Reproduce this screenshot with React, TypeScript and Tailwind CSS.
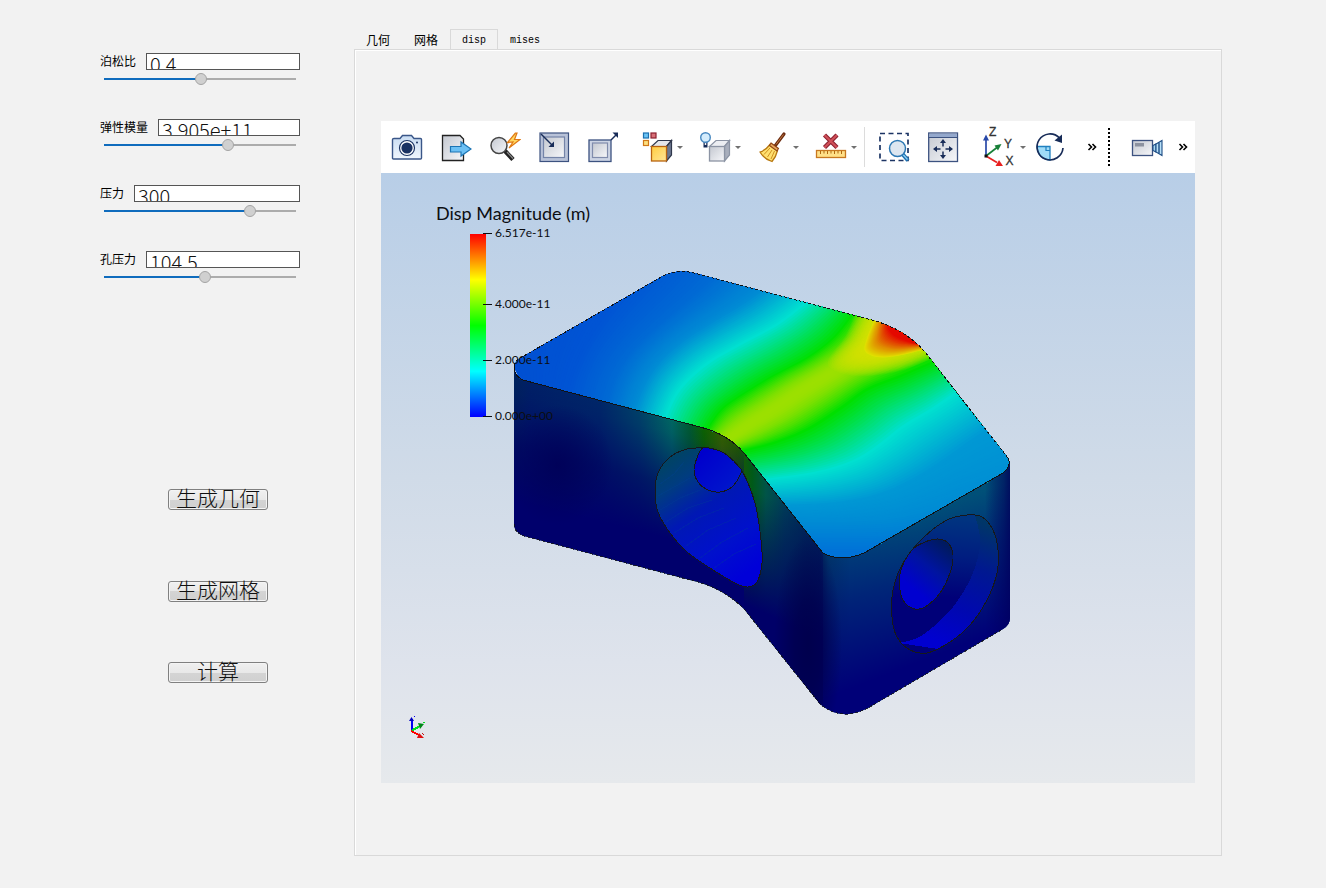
import React, { useState } from "react";

type Pt = [number, number];
type Rgb = [number, number, number];

/* ---------- geometry helpers ---------- */

function smooth(pts: Pt[], closed = false): string {
  const n = pts.length;
  const at = (i: number): Pt => (closed ? pts[(i + n) % n] : pts[Math.max(0, Math.min(n - 1, i))]);
  let d = `M${pts[0][0]} ${pts[0][1]}`;
  const last = closed ? n : n - 1;
  for (let i = 0; i < last; i++) {
    const [a, b, c, e] = [at(i - 1), at(i), at(i + 1), at(i + 2)];
    d += `C${b[0] + (c[0] - a[0]) / 6} ${b[1] + (c[1] - a[1]) / 6} ${c[0] - (e[0] - b[0]) / 6} ${c[1] - (e[1] - b[1]) / 6} ${c[0]} ${c[1]}`;
  }
  return closed ? d + "Z" : d;
}

const mix = (a: number, b: number, t: number) => a + (b - a) * t;
const mixPts = (a: Pt[], b: Pt[], t: number): Pt[] =>
  a.map((p, i) => [mix(p[0], b[i][0], t), mix(p[1], b[i][1], t)] as Pt);
const mixRgb = (a: Rgb, b: Rgb, t: number) =>
  `rgb(${a.map((v, i) => Math.round(mix(v, b[i], t))).join(",")})`;

/* Level curves of the displacement field on the top face, left to right. */
const levels: { c: Rgb; p: Pt[] }[] = [
  { c: [0, 80, 210], p: [[500, 340], [505, 350], [510, 360], [515, 370], [520, 380], [525, 390], [530, 400]] },
  { c: [0, 84, 212], p: [[640, 262], [620, 290], [605, 310], [592, 330], [580, 352], [570, 378], [565, 400]] },
  { c: [0, 106, 212], p: [[725, 262], [700, 288], [676, 309], [652, 330], [630, 352], [614, 378], [606, 405]] },
  { c: [0, 140, 212], p: [[774, 280], [742, 303], [709, 323], [679, 343], [656, 365], [642, 388], [632, 415]] },
  { c: [0, 224, 208], p: [[815, 294], [777, 323], [740, 343], [707, 362], [683, 383], [670, 403], [660, 430]] },
  { c: [0, 224, 0], p: [[853, 312], [833, 337], [807, 357], [773, 375], [740, 395], [720, 410], [705, 432]] },
  { c: [156, 224, 0], p: [[890, 315], [868, 345], [835, 369], [802, 389], [772, 409], [744, 427], [718, 446]] },
  { c: [0, 224, 0], p: [[945, 356], [900, 375], [867, 388], [840, 407], [807, 428], [773, 442], [730, 453]] },
  { c: [0, 224, 208], p: [[965, 385], [933, 407], [903, 425], [880, 443], [853, 460], [813, 472], [755, 480]] },
  { c: [0, 152, 212], p: [[1010, 415], [975, 437], [945, 458], [915, 477], [880, 493], [835, 502], [775, 505]] },
  { c: [0, 140, 212], p: [[1060, 480], [1020, 488], [975, 496], [935, 507], [890, 517], [840, 520], [780, 520]] },
  { c: [0, 112, 216], p: [[1100, 540], [1060, 545], [1010, 548], [960, 550], [900, 553], [850, 553], [800, 553]] },
];

const RIDGE = 6;
/* The field flattens out on both sides of the ridge. */
function ease(i: number, t: number) {
  if (i + 1 === RIDGE) return Math.sin((t * Math.PI) / 2);
  if (i === RIDGE) return 1 - Math.cos((t * Math.PI) / 2);
  return t;
}

const bands: { d: string; fill: string }[] = [];
for (let i = 0; i < levels.length - 1; i++) {
  const steps = 18;
  for (let s = 0; s < steps; s++) {
    const t = s / steps;
    const p = mixPts(levels[i].p, levels[i + 1].p, t);
    bands.push({
      d: `${smooth(p)}L${p[6][0]} 640L1200 640L1200 230L${p[0][0]} 230Z`,
      fill: mixRgb(levels[i].c, levels[i + 1].c, ease(i, t)),
    });
  }
}

/* Closed rings around the peak value. */
const halo: Pt[] = [[856, 310], [846, 335], [828, 364], [856, 376], [900, 371], [938, 356]];
const ringYellow: Pt[] = [[876, 316], [867, 338], [865, 351], [877, 357], [897, 356], [926, 349]];
const ringOrange: Pt[] = [[881, 316], [876, 334], [876, 344], [886, 349], [900, 350], [922, 347]];
const ringRed: Pt[] = [[888, 318], [888, 328], [892, 334], [898, 338], [906, 341], [916, 344]];
const close = (p: Pt[]) => `${smooth(p)}L960 330L900 280Z`;

const rings: { d: string; fill: string; o: number }[] = [];
for (let s = 0; s < 20; s++)
  rings.push({ d: close(mixPts(halo, ringYellow, s / 20)), fill: "rgb(224,224,0)", o: 0.08 });
for (let s = 0; s < 12; s++)
  rings.push({ d: close(mixPts(ringYellow, ringOrange, s / 12)), fill: mixRgb([224, 224, 0], [224, 144, 0], s / 12), o: 1 });
for (let s = 0; s <= 12; s++)
  rings.push({ d: close(mixPts(ringOrange, ringRed, s / 12)), fill: mixRgb([224, 144, 0], [228, 8, 0], s / 12), o: 1 });

const topFace =
  "M523 380Q514 376 514 366Q514 361 522 357L663 276Q678 269 694 273L872 320Q905 329 925 352L1008 458Q1012 466 1003 473L864 553Q841 563 823 553L744 453Q728 434 700 427Z";
const sides =
  "M514 366V524Q514 532 524 536L690 580Q722 587 744 609L820 704Q841 722 868 708L1003 629Q1010 625 1010 618V462L1003 473L864 553Q841 563 823 553L744 453Q728 434 700 427L523 380Q514 376 514 366Z";

const bore: Pt[] = [[703, 448], [687, 449], [670, 457], [658, 473], [655, 492], [658, 512], [670, 533], [687, 552], [713, 570], [737, 584], [748, 587], [757, 582], [762, 563], [761, 540], [756, 507], [748, 483], [740, 468], [727, 455], [717, 450]];
const boreEnd: Pt[] = [[703, 448], [697, 458], [694, 470], [698, 482], [708, 490], [720, 492], [732, 487], [741, 473], [740, 468], [727, 455], [717, 450]];
const pocket: Pt[] = [[967, 515], [982, 517], [993, 530], [998, 550], [997, 573], [987, 600], [970, 625], [950, 642], [927, 653], [910, 650], [897, 637], [892, 617], [893, 590], [903, 563], [923, 538], [947, 520]];
const pocketHole: Pt[] = [[938, 539], [948, 543], [953, 555], [950, 573], [940, 593], [925, 607], [915, 609], [905, 603], [900, 590], [901, 570], [912, 550], [925, 542]];
const pocketWall: Pt[] = [[975, 515], [980, 537], [978, 557], [970, 580], [953, 607], [933, 627], [917, 638], [899, 643]];

const ticks: [string, number][] = [
  ["6.517e-11", 233],
  ["4.000e-11", 304],
  ["2.000e-11", 360],
  ["0.000e+00", 416],
];

function Grad({ id, v, stops }: { id: string; v: number[]; stops: [number, string, number?][] }) {
  return (
    <linearGradient id={id} gradientUnits="userSpaceOnUse" x1={v[0]} y1={v[1]} x2={v[2]} y2={v[3]}>
      {stops.map(([o, c, a], i) => (
        <stop key={i} offset={o} stopColor={c} stopOpacity={a ?? 1} />
      ))}
    </linearGradient>
  );
}

const x = (px: number) => (px - 514) / 496;

function Scene() {
  return (
    <svg viewBox="381 173 814 610" className="block w-full" role="img" aria-label="Disp Magnitude (m)">
      <defs>
        <Grad id="sky" v={[0, 173, 0, 783]} stops={[[0, "#b8cee7"], [0.5, "#d0dbe8"], [0.8, "#dee3ec"], [1, "#e6e9ec"]]} />
        <Grad id="bar" v={[0, 234, 0, 417]} stops={[[0, "#ff0000"], [0.25, "#ffff00"], [0.5, "#00ff00"], [0.75, "#00ffff"], [1, "#0000ff"]]} />
        <Grad
          id="side"
          v={[514, 0, 1010, 0]}
          stops={[[0, "#00225c"], [x(530), "#001f66"], [x(600), "#002668"], [x(640), "#004068"], [x(672), "#006662"], [x(690), "#005a30"], [x(704), "#0c6200"], [x(722), "#325f00"], [x(738), "#205800"], [x(752), "#005a18"], [x(766), "#005448"], [x(785), "#003a58"], [x(805), "#002858"], [x(820), "#002058"], [x(828), "#003468"], [x(850), "#004078"], [x(920), "#004c78"], [x(985), "#005078"], [x(1004), "#004070"], [1, "#002868"]]}
        />
        <Grad id="fadeL" v={[630, 408, 602, 522]} stops={[[0, "#000068", 0], [0.12, "#000068", 0.08], [0.55, "#000064", 0.65], [1, "#00006c", 1]]} />
        <Grad id="fadeM" v={[785, 504, 733, 620]} stops={[[0, "#000058", 0], [0.5, "#000860", 0.65], [0.85, "#000068", 1], [1, "#000068", 1]]} />
        <Grad id="fadeR" v={[930, 512, 985, 652]} stops={[[0, "#000078", 0], [0.35, "#000078", 0.45], [0.9, "#000078", 1], [1, "#000078", 1]]} />
        <Grad id="edgeR" v={[985, 0, 1010, 0]} stops={[[0, "#000060", 0], [1, "#000058", 0.6]]} />
        <radialGradient id="corner">
          <stop offset="0" stopColor="#00004a" stopOpacity="0.9" />
          <stop offset="0.4" stopColor="#00004a" stopOpacity="0.7" />
          <stop offset="1" stopColor="#00004a" stopOpacity="0" />
        </radialGradient>
        <radialGradient id="hollow">
          <stop offset="0" stopColor="#000058" stopOpacity="0.9" />
          <stop offset="1" stopColor="#000058" stopOpacity="0" />
        </radialGradient>
        <Grad id="boreFill" v={[668, 455, 748, 572]} stops={[[0, "#004460"], [0.2, "#003c80"], [0.45, "#0018b4"], [0.75, "#0010cc"], [1, "#0000d8"]]} />
        <Grad id="boreEndFill" v={[700, 455, 735, 490]} stops={[[0, "#0000cc"], [1, "#0018cc"]]} />
        <Grad id="pocketFill" v={[945, 518, 940, 650]} stops={[[0, "#003480"], [0.3, "#001c80"], [0.6, "#000078"], [1, "#000078"]]} />
        <Grad id="holeFill" v={[946, 545, 912, 588]} stops={[[0, "#001a60"], [0.5, "#0014a0"], [1, "#0000d0"]]} />
        <Grad id="wallFill" v={[990, 525, 945, 645]} stops={[[0, "#003668"], [0.35, "#001890"], [0.7, "#0008b0"], [1, "#0000d0"]]} />
        <clipPath id="topClip"><path d={topFace} /></clipPath>
        <clipPath id="sideClip"><path d={sides} /></clipPath>
        <clipPath id="pocketClip"><path d={smooth(pocket, true)} /></clipPath>
      </defs>

      <rect x="381" y="173" width="814" height="610" fill="url(#sky)" />

      <g clipPath="url(#sideClip)">
        <rect x="510" y="350" width="504" height="370" fill="url(#side)" />
        <path d="M510 350H744V720H510Z" fill="url(#fadeL)" />
        <path d="M744 350H823V720H744Z" fill="url(#fadeM)" />
        <path d="M823 350H1014V720H823Z" fill="url(#fadeR)" />
        <ellipse cx="808" cy="645" rx="34" ry="110" fill="url(#corner)" />
        <ellipse cx="558" cy="465" rx="55" ry="60" fill="url(#hollow)" />
        <rect x="985" y="450" width="28" height="200" fill="url(#edgeR)" />
      </g>

      <g shapeRendering="crispEdges">
        <path d={smooth(bore, true)} fill="url(#boreFill)" stroke="#16181c" />
        <g fill="none" stroke="#004098" strokeOpacity="0.28">
          <path d="M660 484L674 474L684 462M658 496L676 486L690 478M660 510L680 498L700 490M666 522L688 508L712 500M674 533L698 518L724 508M686 546L708 530L736 518M700 558L722 542L748 528M714 568L734 554L756 544" />
        </g>
        <path d={smooth(boreEnd, true)} fill="url(#boreEndFill)" stroke="#16181c" />
        <path d={smooth(pocket, true)} fill="url(#pocketFill)" />
        <path d={`${smooth(pocketWall)}L1010 660L1010 510Z`} fill="url(#wallFill)" clipPath="url(#pocketClip)" />
        <path d={smooth(pocket, true)} fill="none" stroke="#16181c" />
        <path d={smooth(pocketHole, true)} fill="url(#holeFill)" stroke="#16181c" />
      </g>

      <g clipPath="url(#topClip)">
        {bands.map((b, i) => (
          <path key={i} d={b.d} fill={b.fill} />
        ))}
        {rings.map((r, i) => (
          <path key={i} d={r.d} fill={r.fill} fillOpacity={r.o} />
        ))}
      </g>

      <g fill="none" stroke="#101214" shapeRendering="crispEdges">
        <path d="M514 366Q514 376 523 380L700 427Q728 434 744 453L823 553Q841 563 864 553L1003 473Q1012 466 1008 458" />
        <path d="M514 366Q514 361 522 357L663 276Q678 269 694 273L872 320Q905 329 925 352L1008 458" strokeDasharray="3 2" />
        <path d="M514 524Q514 532 524 536L690 580Q722 587 744 609L820 704Q841 722 868 708L1003 629" strokeDasharray="3 2" strokeOpacity="0.8" />
      </g>

      <rect x="470" y="234" width="16" height="183" fill="url(#bar)" />
      <g className="font-['Lato',sans-serif]" fill="#0c0e12">
        <text x="436" y="220" fontSize="18">Disp Magnitude (m)</text>
        {ticks.map(([label, y]) => (
          <g key={label}>
            <path d={`M483 ${y + 0.5}H492`} stroke="#0c0e12" />
            <text x="495" y={y + 4} fontSize="12">{label}</text>
          </g>
        ))}
      </g>

      <g fill="none" strokeWidth="2" shapeRendering="crispEdges">
        <path d="M411.500 731V719" stroke="#0000f0" />
        <path d="M411 731L420 726" stroke="#00e020" />
        <path d="M411 731L419 735" stroke="#ff0000" />
        <path d="M414 716.500H415" stroke="#0000f0" strokeWidth="1" />
        <path d="M423 723L425 722" stroke="#00e020" strokeWidth="1" />
        <path d="M422 733L424 735" stroke="#c01010" strokeWidth="1" />
      </g>
      <path d="M409 721L411.500 717L414 721Z" fill="#0000c0" />
      <path d="M418 723L424 724L420 729Z" fill="#008818" />
      <path d="M419 733L424 738L417 738Z" fill="#e01010" />
    </svg>
  );
}

/* ---------- toolbar icons ---------- */

function Icon({ children }: { children: React.ReactNode }) {
  return (
    <svg viewBox="0 0 32 32" className="block size-8 shrink-0" fill="none" aria-hidden="true">
      <defs>
        <linearGradient id="steel" x1="0" y1="0" x2="1" y2="1">
          <stop offset="0" stopColor="#c4c8d0" />
          <stop offset="1" stopColor="#f6f7fa" />
        </linearGradient>
        <linearGradient id="ice" x1="0" y1="0" x2="0" y2="1">
          <stop offset="0" stopColor="#c8dcf2" />
          <stop offset="1" stopColor="#f0f6fd" />
        </linearGradient>
        <linearGradient id="gold" x1="0" y1="0" x2="1" y2="1">
          <stop offset="0" stopColor="#ffcc40" />
          <stop offset="1" stopColor="#ffe698" />
        </linearGradient>
      </defs>
      {children}
    </svg>
  );
}

const CameraIcon = () => (
  <Icon>
    <path d="M3 7.500H9L11.500 4.500H20.500L23 7.500H29.500Q30.500 7.500 30.500 8.500V27Q30.500 28 29.500 28H2.500Q1.500 28 1.500 27V8.500Q1.500 7.500 3 7.500Z" fill="url(#ice)" stroke="#3a5688" strokeWidth="1.400" />
    <circle cx="16" cy="17" r="7.500" fill="#fff" stroke="#1c3464" strokeWidth="1.200" />
    <circle cx="16" cy="17" r="5.600" fill="#1a3262" />
    <circle cx="26" cy="11.500" r="1" fill="#1a3262" />
  </Icon>
);
const ExportIcon = () => (
  <Icon>
    <path d="M2.500 4.500H20L23.500 8V29.500H2.500Z" fill="url(#steel)" stroke="#222" strokeWidth="1.300" />
    <path d="M10.500 15.500H21V11L31 18L21 25V21H10.500Z" fill="#6cc0f4" stroke="#1c74b4" strokeWidth="1.200" />
  </Icon>
);
const QuickFindIcon = () => (
  <Icon>
    <path d="M16 20L24 28.500" stroke="#222" strokeWidth="4.500" />
    <path d="M18 21L24 27.500" stroke="#888" strokeWidth="1.200" />
    <circle cx="10" cy="14.500" r="8" fill="url(#steel)" stroke="#444" strokeWidth="1.500" />
    <path d="M26.500 2L18.500 11.500L24 11L20 17L31 8.500L25.500 8.500L28 2Z" fill="#ffd860" stroke="#e07814" strokeWidth="1.200" />
  </Icon>
);
const ZoomInBoxIcon = () => (
  <Icon>
    <rect x="2" y="2" width="28.500" height="28.500" fill="#b8c2d8" stroke="#3c5280" strokeWidth="1.200" />
    <rect x="5.500" y="6" width="21" height="20.500" fill="url(#steel)" stroke="#7484a8" strokeWidth="1.200" />
    <path d="M3 3L15 15" stroke="#182c58" strokeWidth="1.400" />
    <path d="M16 16V10.500L10.500 16Z" fill="#182c58" />
  </Icon>
);
const ZoomOutBoxIcon = () => (
  <Icon>
    <rect x="2" y="9" width="22" height="21.500" fill="#ccd4e4" stroke="#3c5280" strokeWidth="1.300" />
    <rect x="5.500" y="12" width="15" height="14.500" fill="url(#steel)" stroke="#808cac" strokeWidth="1.200" />
    <path d="M24 9L30 3" stroke="#182c58" strokeWidth="1.400" />
    <path d="M31 1.500V7L25.500 1.500Z" fill="#182c58" />
  </Icon>
);
const CubeIcon = () => (
  <Icon>
    <rect x="2.500" y="2" width="5" height="5" fill="#6cc4f4" stroke="#1c70b0" strokeWidth="1.200" />
    <rect x="10" y="2" width="5" height="5" fill="#d87078" stroke="#8c2030" strokeWidth="1.200" />
    <rect x="2.500" y="9.500" width="5" height="5" fill="#fce080" stroke="#d07818" strokeWidth="1.200" />
    <path d="M10.500 15.500L17 9.500H30.500L25.500 15.500Z" fill="#e4e6ea" stroke="#30384c" strokeWidth="1.200" />
    <path d="M25.500 15.500L30.500 9.500V24L25.500 30Z" fill="#6c7890" stroke="#30384c" strokeWidth="1.200" />
    <rect x="10.500" y="15.500" width="15" height="14.500" fill="url(#gold)" stroke="#b86410" strokeWidth="1.300" />
  </Icon>
);
const BulbCubeIcon = () => (
  <Icon>
    <path d="M10.500 15.500L17 9.500H30.500L25.500 15.500Z" fill="#eceef2" stroke="#8c94a4" strokeWidth="1.200" />
    <path d="M25.500 15.500L30.500 9.500V24L25.500 30Z" fill="#a8aebc" stroke="#8c94a4" strokeWidth="1.200" />
    <rect x="10.500" y="15.500" width="15" height="14.500" fill="url(#steel)" stroke="#8c94a4" strokeWidth="1.300" />
    <path d="M6.500 11V16.500" stroke="#182c58" strokeWidth="4" />
    <path d="M6.500 11V14" stroke="#f0f4fa" strokeWidth="1.500" />
    <circle cx="6.500" cy="6.500" r="4.800" fill="#d4ecfc" stroke="#4888c0" strokeWidth="1.400" />
  </Icon>
);
const BroomIcon = () => (
  <Icon>
    <path d="M27 3L18 15" stroke="#6c2c10" strokeWidth="3.200" strokeLinecap="round" />
    <path d="M26.500 3.500L19 13.500" stroke="#c07840" strokeWidth="1" />
    <path d="M13 13.500Q9 19 3 21Q7 28 15 30.500Q19 26 20.500 19.500Z" fill="#ffe070" stroke="#b87810" strokeWidth="1.300" />
    <path d="M13 17L7 23.500M15 19L10.500 26M17.500 20L14 28" stroke="#d09020" strokeWidth="1" />
    <path d="M14 12L21.500 17.500L20 20L12.500 14.500Z" fill="#e8a860" stroke="#904414" strokeWidth="1.100" />
  </Icon>
);
const ClearRulerIcon = () => (
  <Icon>
    <path d="M9.500 4L22 16.500M22 4L9.500 16.500" stroke="#8c2030" strokeWidth="4.400" />
    <path d="M9.500 4L22 16.500M22 4L9.500 16.500" stroke="#d05058" strokeWidth="2.200" />
    <rect x="1.500" y="19.500" width="29" height="7" fill="#ffe088" stroke="#c87820" strokeWidth="1.300" />
    <path d="M5.500 20V23M9 20V22.500M12.500 20V23M16 20V22.500M19.500 20V23M23 20V22.500M26.500 20V23" stroke="#b06810" />
  </Icon>
);
const SelectZoomIcon = () => (
  <Icon>
    <rect x="2" y="2.500" width="28" height="27" stroke="#1c3464" strokeWidth="1.700" strokeDasharray="5 3.500" />
    <path d="M24.500 23L30 29.500" stroke="#1c70b0" strokeWidth="4" />
    <path d="M25 23.500L29.500 28.500" stroke="#90d0f4" strokeWidth="1.200" />
    <circle cx="19.500" cy="17.500" r="8" fill="#dce6f0" stroke="#2c78b4" strokeWidth="1.500" />
  </Icon>
);
const FitIcon = () => (
  <Icon>
    <rect x="1.700" y="2" width="28.800" height="28.500" fill="url(#steel)" stroke="#3c5280" strokeWidth="1.300" />
    <rect x="2.300" y="2.600" width="27.600" height="3.400" fill="#94a8cc" />
    <path d="M1.500 6.500H30.500" stroke="#3c5280" />
    <path d="M16 11V15.500M16 20.500V25M9 18H13.500M18.500 18H23" stroke="#182c58" strokeWidth="1.500" />
    <path d="M16 8L19 12H13ZM16 28L19 24H13ZM6 18L10 15V21ZM26 18L22 15V21Z" fill="#182c58" />
  </Icon>
);
const AxesIcon = () => (
  <svg viewBox="0 -8 34 48" className="block h-12 w-[34px] shrink-0" fill="none" aria-hidden="true">
    <path d="M4 25V8" stroke="#2848a8" strokeWidth="1.700" />
    <path d="M4 3.500L7 9.500H1Z" fill="#2848a8" />
    <path d="M4 25L15 16.500" stroke="#188038" strokeWidth="1.700" />
    <path d="M19.500 13L16 19.500L12.500 14.500Z" fill="#188038" />
    <path d="M4 25L15 31.500" stroke="#e82020" strokeWidth="1.700" />
    <path d="M21 35H13.500L17 29Z" fill="#e82020" />
    <rect x="2.500" y="23.500" width="3" height="3" fill="#111" />
    <g className="font-['Liberation_Sans',sans-serif]" fill="#333" fontSize="12" stroke="#333" strokeWidth="0.300">
      <text x="7" y="5">Z</text>
      <text x="22" y="16.500">Y</text>
      <text x="23.500" y="34">X</text>
    </g>
  </svg>
);
const RotateIcon = () => (
  <Icon>
    <path d="M3 15.500H16V29Q4 28 3 15.500Z" fill="#a0dcf8" stroke="#2080c0" strokeWidth="1.300" />
    <path d="M12 15.500V19.500H16" stroke="#2080c0" strokeWidth="1.200" />
    <path d="M25.500 7A13 13 0 1 0 29 17" stroke="#182c58" strokeWidth="1.700" />
    <path d="M28 3.500V12L20.500 9.500Z" fill="#182c58" />
  </Icon>
);
const VideoIcon = () => (
  <Icon>
    <rect x="1.500" y="9.500" width="20" height="15" fill="url(#steel)" stroke="#3c5280" strokeWidth="1.300" />
    <rect x="4" y="12" width="9" height="3.500" fill="#8c92a0" />
    <path d="M22 14.500L25 13V21L22 19.500Z" fill="#a8d8f4" stroke="#1c4c84" strokeWidth="1.100" />
    <path d="M25 13L31 9.500V24.500L25 21Z" fill="#b8e0f8" stroke="#1c4c84" strokeWidth="1.100" />
    <path d="M28 11.500V22.500" stroke="#1c4c84" strokeWidth="1.400" />
  </Icon>
);

function ToolButton({ label, children }: { label: string; children: React.ReactNode }) {
  return (
    <button type="button" aria-label={label} className="flex w-[49px] shrink-0 items-center justify-center">
      {children}
    </button>
  );
}
function MenuButton({ label, children }: { label: string; children: React.ReactNode }) {
  return (
    <button type="button" aria-label={label} aria-haspopup="menu" className="flex w-[58px] shrink-0 items-center gap-1 pl-[9px]">
      {children}
      <span className="size-0 border-x-[3px] border-t-[3px] border-x-transparent border-t-[#707070]" />
    </button>
  );
}
function MoreButton() {
  return (
    <button type="button" aria-label="More" className="flex w-5 shrink-0 items-center justify-center">
      <svg viewBox="0 0 10 8" className="h-2 w-2.5" fill="none" stroke="#000" strokeWidth="1.600" aria-hidden="true">
        <path d="M1.500 1L4.500 4L1.500 7M5.500 1L8.500 4L5.500 7" />
      </svg>
    </button>
  );
}

function Toolbar() {
  return (
    <div role="toolbar" aria-label="View" className="flex h-[52px] items-center overflow-hidden bg-white pl-px">
      <ToolButton label="Screenshot"><CameraIcon /></ToolButton>
      <ToolButton label="Export"><ExportIcon /></ToolButton>
      <ToolButton label="Quick find"><QuickFindIcon /></ToolButton>
      <ToolButton label="Zoom in box"><ZoomInBoxIcon /></ToolButton>
      <ToolButton label="Zoom out box"><ZoomOutBoxIcon /></ToolButton>
      <div className="ml-[5px] flex">
        <MenuButton label="Display"><CubeIcon /></MenuButton>
        <MenuButton label="Lighting"><BulbCubeIcon /></MenuButton>
        <MenuButton label="Clean"><BroomIcon /></MenuButton>
        <MenuButton label="Clear measure"><ClearRulerIcon /></MenuButton>
      </div>
      <div className="mr-1 h-10 w-px shrink-0 bg-[#dcdcdc]" />
      <ToolButton label="Zoom to selection"><SelectZoomIcon /></ToolButton>
      <ToolButton label="Fit view"><FitIcon /></ToolButton>
      <div className="-mr-1.5 ml-1.5 flex">
        <MenuButton label="Axes"><AxesIcon /></MenuButton>
      </div>
      <ToolButton label="Rotate"><RotateIcon /></ToolButton>
      <div className="ml-2 flex"><MoreButton /></div>
      <div className="mx-1.5 h-[38px] shrink-0 border-l-2 border-dotted border-black" />
      <div className="ml-1.5 flex">
        <ToolButton label="Record"><VideoIcon /></ToolButton>
      </div>
      <div className="ml-0.5 flex"><MoreButton /></div>
    </div>
  );
}

/* ---------- parameters ---------- */

function Param({ id, label, text, start }: { id: string; label: string; text: string; start: number }) {
  const [value, setValue] = useState(start);
  const [entry, setEntry] = useState(text);
  const fill = ((6 + value * 1.8) / 192) * 100;
  return (
    <div className="h-[66px]">
      <div className="flex items-center gap-2.5">
        <label htmlFor={id} className="shrink-0 text-xs leading-4">{label}</label>
        <input
          id={id}
          value={entry}
          onChange={(e) => setEntry(e.target.value)}
          className="h-[17px] w-0 min-w-0 flex-1 border border-[#555] bg-white px-[3px] pt-1 pb-0 font-['Noto_Sans_CJK_SC',sans-serif] text-[20px] leading-[20px] font-light text-[#111] outline-none"
        />
      </div>
      <input
        type="range"
        aria-label={label}
        min={0}
        max={100}
        step="any"
        value={value}
        onChange={(e) => setValue(Number(e.target.value))}
        style={{ backgroundImage: `linear-gradient(to right, #0f6cbd ${fill}%, #acacac ${fill}%)` }}
        className="mx-1 mt-[3px] block h-3 w-[calc(100%-8px)] appearance-none bg-[length:100%_2px] bg-center bg-no-repeat [&::-webkit-slider-thumb]:size-3 [&::-webkit-slider-thumb]:appearance-none [&::-webkit-slider-thumb]:rounded-full [&::-webkit-slider-thumb]:border [&::-webkit-slider-thumb]:border-[#a4a4a4] [&::-webkit-slider-thumb]:bg-[#d0d0d0]"
      />
    </div>
  );
}

function ActionButton({ children }: { children: React.ReactNode }) {
  return (
    <button
      type="button"
      className="flex h-[21px] w-[100px] items-center justify-center rounded-[3px] border border-[#808080] bg-[linear-gradient(#f0f0f0,#e8e8e8_50%,#d4d4d4_50%,#d0d0d0)] pb-0.5 text-[21px] leading-[19px] font-light text-[#111] shadow-[inset_0_0_0_1px_#f4f4f4]"
    >
      {children}
    </button>
  );
}

const tabs = ["几何", "网格", "disp", "mises"];

export default function App() {
  const [tab, setTab] = useState("disp");
  return (
    <div className="flex min-h-screen bg-[#f2f2f2] font-['Liberation_Sans','Noto_Sans_CJK_SC',sans-serif] text-black">
      <aside className="w-[354px] shrink-0 pt-[53px] pr-[54px] pl-[100px]">
        <Param id="poisson" label="泊松比" text="0.4" start={50.6} />
        <Param id="modulus" label="弹性模量" text="3.905e+11" start={65.6} />
        <Param id="pressure" label="压力" text="300" start={77.6} />
        <Param id="hole-pressure" label="孔压力" text="104.5" start={53} />
        <div className="mt-[172px] flex flex-col items-start pl-[68px]">
          <ActionButton>生成几何</ActionButton>
          <div className="mt-[71px]"><ActionButton>生成网格</ActionButton></div>
          <div className="mt-[60px]"><ActionButton>计算</ActionButton></div>
        </div>
      </aside>

      <main className="mr-[104px] min-w-0 flex-1 pt-[29px] pb-8">
        <div role="tablist" className="flex h-5">
          {tabs.map((t) => (
            <button
              key={t}
              type="button"
              role="tab"
              aria-selected={t === tab}
              onClick={() => setTab(t)}
              className={
                t === tab
                  ? "border border-b-0 border-[#d9d9d9] px-[11px] pt-px font-['Liberation_Mono','Noto_Sans_CJK_SC',monospace] text-[10px] leading-5"
                  : t.length === 2
                    ? "px-3 pt-0.5 text-xs leading-5"
                    : "px-3 pt-0.5 font-['Liberation_Mono','Noto_Sans_CJK_SC',monospace] text-[10px] leading-5"
              }
            >
              {t}
            </button>
          ))}
        </div>
        <section role="tabpanel" className="border border-[#d9d9d9] px-[26px] pt-[71px] pb-[72px] shadow-[inset_1px_1px_0_#fff]">
          <Toolbar />
          <Scene />
        </section>
      </main>
    </div>
  );
}
